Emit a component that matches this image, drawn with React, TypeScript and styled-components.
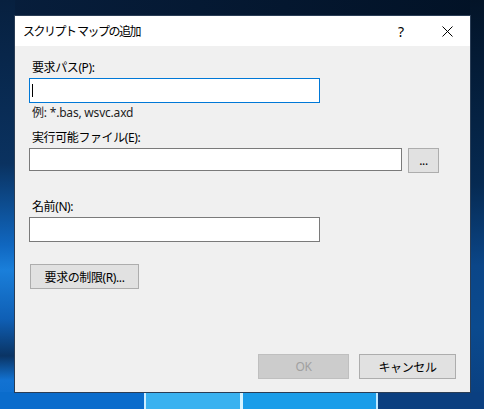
import React from "react";
import styled, { createGlobalStyle } from "styled-components";

const GlobalStyle = createGlobalStyle`
  html, body {
    margin: 0;
    padding: 0;
  }
  body {
    font-family: "Noto Sans", "Noto Sans CJK JP", sans-serif;
    font-size: 12px;
    color: #000;
  }
`;

const Desktop = styled.div`
  width: 484px;
  height: 409px;
  box-sizing: border-box;
  padding: 15px 13px 17px 14px;
  background:
    linear-gradient(90deg, #0a6ccc 0 144px, #cdeeff 144px 146px, #3ab2f0 146px 240px, #d6f3ff 240px 243px, #1a9de9 243px 376px, #bfe8ff 376px 378px, #0b3f80 378px) 0 100% / 100% 17px no-repeat,
    linear-gradient(180deg, #07203f 0%, #0a3260 40%, #1067c0 60%, #1a7fda 66%, #0f5fb5 78%, #0a3464 87%, #1272d2 93%, #0a6ccc 100%) 0 0 / 15px 100% no-repeat,
    linear-gradient(180deg, #031428 0%, #062a52 45%, #0b4688 65%, #0b4a8e 80%, #0a3e7e 100%) 100% 0 / 14px 100% no-repeat,
    linear-gradient(90deg, #071e3c, #021226);
`;

const Dialog = styled.div`
  width: 457px;
  height: 378px;
  box-sizing: border-box;
  border: 1px solid #2a3d55;
  display: flex;
  flex-direction: column;
  background: #f0f0f0;
`;

const TitleBar = styled.div`
  height: 30px;
  background: #fff;
  display: flex;
  align-items: center;
`;

const Title = styled.div`
  flex: 1;
  padding-left: 8px;
  letter-spacing: -1.5px;
  color: #000;
`;

const CaptionButton = styled.div`
  width: 46px;
  height: 30px;
  display: flex;
  align-items: center;
  justify-content: center;
  font-size: 14px;
  color: #000;
`;

const Body = styled.div`
  flex: 1;
  display: flex;
  flex-direction: column;
  padding: 14px 14px 13px 14px;
`;

const Label = styled.div<{ $top?: number }>`
  line-height: 16px;
  height: 16px;
  padding-left: 3px;
  margin-top: ${(p) => p.$top ?? 0}px;
  margin-bottom: 2px;
  letter-spacing: -0.4px;
  color: #000;
`;

const Hint = styled.div`
  line-height: 16px;
  padding-left: 3px;
  margin-top: 2px;
  color: #1e1e1e;
  letter-spacing: -0.2px;
`;

const TextBox = styled.div<{ $width: number; $height?: number; $focused?: boolean }>`
  box-sizing: border-box;
  width: ${(p) => p.$width}px;
  height: ${(p) => p.$height ?? 25}px;
  background: #fff;
  border: 1px solid ${(p) => (p.$focused ? "#0078d7" : "#7a7a7a")};
  display: flex;
  align-items: center;
  padding-left: 2px;
`;

const Caret = styled.span`
  width: 1px;
  height: 13px;
  background: #000;
`;

const Row = styled.div`
  display: flex;
  align-items: flex-start;
  gap: 6px;
`;

const Button = styled.button<{ $width: number; $disabled?: boolean }>`
  box-sizing: border-box;
  width: ${(p) => p.$width}px;
  height: 25px;
  margin: 0;
  padding: 0;
  font: inherit;
  letter-spacing: -0.4px;
  background: ${(p) => (p.$disabled ? "#cccccc" : "#e1e1e1")};
  border: 1px solid ${(p) => (p.$disabled ? "#bfbfbf" : "#adadad")};
  color: ${(p) => (p.$disabled ? "#a0a0a0" : "#000")};
  display: flex;
  align-items: center;
  justify-content: center;
`;

const LimitButton = styled(Button)`
  margin-top: 22px;
  margin-left: 1px;
`;

const Spacer = styled.div`
  flex: 1;
`;

const Footer = styled.div`
  display: flex;
  justify-content: flex-end;
  gap: 10px;
`;

const CloseIcon = () => (
  <svg width="11" height="11" viewBox="0 0 11 11">
    <path d="M0.5 0.5 L10.5 10.5 M10.5 0.5 L0.5 10.5" stroke="#000" strokeWidth="1" fill="none" />
  </svg>
);

export default function App() {
  return (
    <>
      <GlobalStyle />
      <Desktop>
        <Dialog>
          <TitleBar>
            <Title>スクリプト マップの追加</Title>
            <CaptionButton>?</CaptionButton>
            <CaptionButton>
              <CloseIcon />
            </CaptionButton>
          </TitleBar>
          <Body>
            <Label>要求パス(P):</Label>
            <TextBox $width={291} $focused>
              <Caret />
            </TextBox>
            <Hint>例: *.bas, wsvc.axd</Hint>
            <Label $top={9}>実行可能ファイル(E):</Label>
            <Row>
              <TextBox $width={373} $height={23} />
              <Button $width={31}>...</Button>
            </Row>
            <Label $top={26}>名前(N):</Label>
            <TextBox $width={291} />
            <LimitButton $width={109}>要求の制限(R)...</LimitButton>
            <Spacer />
            <Footer>
              <Button $width={91} $disabled>
                OK
              </Button>
              <Button $width={97}>キャンセル</Button>
            </Footer>
          </Body>
        </Dialog>
      </Desktop>
    </>
  );
}
